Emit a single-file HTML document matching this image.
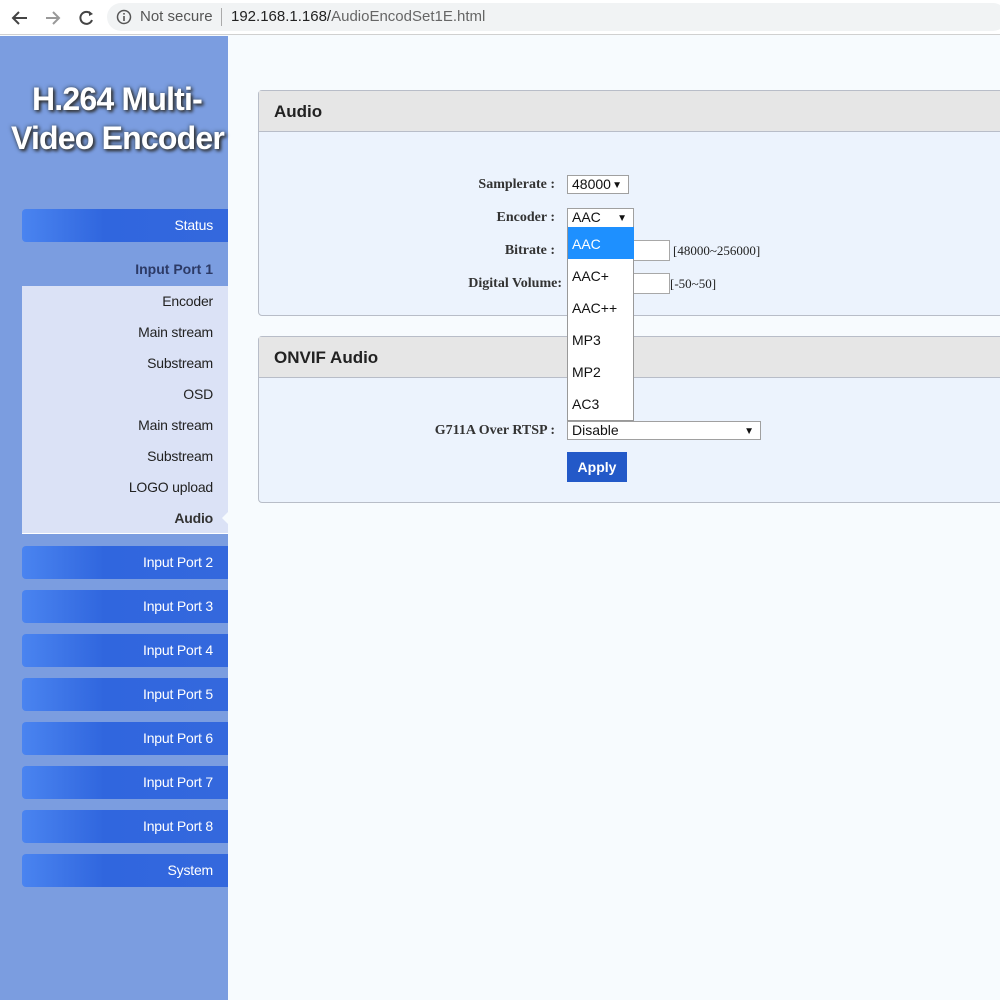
<!DOCTYPE html>
<html><head><meta charset="utf-8"><style>
*{margin:0;padding:0;box-sizing:border-box}
body{width:1000px;height:1000px;overflow:hidden;background:#f7fbfe;font-family:"Liberation Sans",sans-serif;position:relative}
.abs{position:absolute}
#top{left:0;top:0;width:1000px;height:35px;background:#fff;border-bottom:1px solid #d0d0d0}
#url{left:107px;top:3px;width:900px;height:28px;background:#f1f3f4;border-radius:14px}
#side{left:0;top:36px;width:228px;height:964px;background:#7b9de0}
.title{color:#fff;font-weight:bold;font-size:32px;letter-spacing:-0.8px;text-shadow:2px 2px 3px #333,0 0 4px #345;white-space:nowrap}
.btn{left:22px;width:206px;height:33px;border-radius:4px 0 0 4px;background:linear-gradient(90deg,#4a84f0 0%,#3066de 40%,#3468dd 100%);color:#fff;font-size:14px;text-align:right;padding-right:15px;line-height:33px;letter-spacing:-0.2px}
#sub{left:22px;top:286px;width:206px;height:248px;background:#dbe2f6;border-bottom:1px solid #fff}
.si{position:absolute;right:15px;font-size:14px;color:#222;letter-spacing:-0.2px}
.panel{left:258px;width:760px;border:1px solid #b8bdc8;border-radius:4px 0 0 4px;background:#ecf3fd}
.ph{height:41px;background:#e6e6e6;border-bottom:1px solid #b8bdc8;font-weight:bold;font-size:17px;color:#222;padding:11px 0 0 15px}
.lbl{font-family:"Liberation Serif",serif;font-weight:bold;font-size:14px;color:#333;text-align:right}
.sel{background:#fff;border:1px solid #a0a0a0;font-size:14px;color:#111;padding:1px 4px;line-height:15px}
.arr{position:absolute;right:6px;top:2px;font-size:10px}
.inp{background:#fff;border:1px solid #a8a8a8}
.rng{font-family:"Liberation Serif",serif;font-size:13px;color:#222}
.dd{left:567px;top:226px;width:67px;height:195px;background:#fff;border:1px solid #999;border-top:none}
.di{position:absolute;left:4px;font-size:14px;color:#111}
</style></head><body>
<div id="top" class="abs"></div>
<div id="url" class="abs"></div>
<svg class="abs" style="left:10px;top:8px" width="90" height="20" viewBox="0 0 90 20">
<path d="M17 10H4M9 4L3 10l6 6" stroke="#444" stroke-width="2" fill="none"/>
<path d="M36 10h13M43 4l6 6-6 6" stroke="#999" stroke-width="2" fill="none"/>
<path d="M81 6A6 6 0 1 0 82 12" stroke="#444" stroke-width="2" fill="none"/><path d="M79 3l4 3-4 2z" fill="#444"/>
</svg>
<svg class="abs" style="left:116px;top:9px" width="16" height="16"><circle cx="8" cy="8" r="6.5" stroke="#555" stroke-width="1.5" fill="none"/><rect x="7.2" y="7" width="1.6" height="5" fill="#555"/><rect x="7.2" y="4" width="1.6" height="1.6" fill="#555"/></svg>
<div class="abs" style="left:140px;top:8px;font-size:15px;color:#555">Not secure</div>
<div class="abs" style="left:221px;top:8px;width:1px;height:18px;background:#aaa"></div>
<div class="abs" style="left:231px;top:8px;font-size:15px;color:#222">192.168.1.168/<span style="color:#666">AudioEncodSet1E.html</span></div>

<div id="side" class="abs"></div>
<div class="abs title" style="left:32px;top:81px">H.264 Multi-</div>
<div class="abs title" style="left:11px;top:120px">Video Encoder</div>
<div class="abs btn" style="top:209px">Status</div>
<div class="abs" style="left:22px;top:261px;width:191px;text-align:right;font-size:14px;font-weight:bold;color:#2c3a66">Input Port 1</div>
<div id="sub" class="abs">
<div class="si" style="top:7px">Encoder</div>
<div class="si" style="top:38px">Main stream</div>
<div class="si" style="top:69px">Substream</div>
<div class="si" style="top:100px">OSD</div>
<div class="si" style="top:131px">Main stream</div>
<div class="si" style="top:162px">Substream</div>
<div class="si" style="top:193px">LOGO upload</div>
<div class="si" style="top:224px;font-weight:bold;color:#333">Audio</div>
</div>
<div class="abs" style="left:222px;top:512px;width:0;height:0;border-top:6px solid transparent;border-bottom:6px solid transparent;border-right:6px solid #f7fbfe"></div>
<div class="abs btn" style="top:546px">Input Port 2</div>
<div class="abs btn" style="top:590px">Input Port 3</div>
<div class="abs btn" style="top:634px">Input Port 4</div>
<div class="abs btn" style="top:678px">Input Port 5</div>
<div class="abs btn" style="top:722px">Input Port 6</div>
<div class="abs btn" style="top:766px">Input Port 7</div>
<div class="abs btn" style="top:810px">Input Port 8</div>
<div class="abs btn" style="top:854px">System</div>

<div class="abs panel" style="top:90px;height:226px"><div class="ph">Audio</div></div>
<div class="abs panel" style="top:336px;height:167px"><div class="ph">ONVIF Audio</div></div>

<div class="abs lbl" style="left:400px;width:155px;top:177px">Samplerate :</div>
<div class="abs sel" style="left:567px;top:175px;width:62px;height:19px">48000<span class="arr">▼</span></div>
<div class="abs lbl" style="left:400px;width:155px;top:210px">Encoder :</div>
<div class="abs sel" style="left:567px;top:208px;width:67px;height:19px">AAC<span class="arr">▼</span></div>
<div class="abs lbl" style="left:400px;width:155px;top:243px">Bitrate :</div>
<div class="abs inp" style="left:567px;top:240px;width:103px;height:21px"></div>
<div class="abs rng" style="left:673px;top:243px">[48000~256000]</div>
<div class="abs lbl" style="left:400px;width:162px;top:276px">Digital Volume:</div>
<div class="abs inp" style="left:567px;top:273px;width:103px;height:21px"></div>
<div class="abs rng" style="left:670px;top:276px">[-50~50]</div>

<div class="abs dd">
<div style="position:absolute;left:0;top:1px;width:66px;height:32px;background:#1e90ff"></div>
<div class="di" style="top:10px;color:#fff">AAC</div>
<div class="di" style="top:42px">AAC+</div>
<div class="di" style="top:74px">AAC++</div>
<div class="di" style="top:106px">MP3</div>
<div class="di" style="top:138px">MP2</div>
<div class="di" style="top:170px">AC3</div>
</div>

<div class="abs lbl" style="left:380px;width:175px;top:423px">G711A Over RTSP :</div>
<div class="abs sel" style="left:567px;top:421px;width:194px;height:19px">Disable<span class="arr">▼</span></div>
<div class="abs" style="left:567px;top:452px;width:60px;height:30px;background:#2359c8;color:#fff;font-weight:bold;font-size:14px;text-align:center;line-height:30px">Apply</div>
</body></html>
